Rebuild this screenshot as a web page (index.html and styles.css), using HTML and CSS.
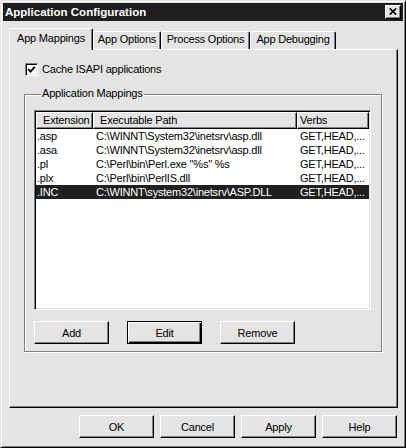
FILE: index.html
```html
<!DOCTYPE html>
<html>
<head>
<meta charset="utf-8">
<link rel="stylesheet" href="styles.css">
</head>
<body>
<div class="window">
  <div class="titlebar">
    <span class="title">Application Configuration</span>
    <div class="close"><svg width="8" height="7" viewBox="0 0 8 7"><path d="M0.8 0.5L7.2 6.5M7.2 0.5L0.8 6.5" stroke="#000" stroke-width="1.7" fill="none"/></svg></div>
  </div>
  <div class="body">
    <div class="tabs">
      <div class="tab sel t1">App Mappings</div>
      <div class="tab t2">App Options</div>
      <div class="tab t3">Process Options</div>
      <div class="tab t4">App Debugging</div>
    </div>
    <div class="panel">
      <div class="check-row">
        <span class="checkbox"><svg width="9" height="9" viewBox="0 0 9 9"><path d="M1.2 4.2L3.5 6.6L7.8 1.8" stroke="#000" stroke-width="1.8" fill="none"/></svg></span>
        <span>Cache ISAPI applications</span>
      </div>
      <div class="group">
        <div class="legend">Application Mappings</div>
        <div class="list">
          <div class="lhead">
            <div class="hc h1">Extension</div>
            <div class="hc h2">Executable Path</div>
            <div class="hc h3">Verbs</div>
          </div>
          <div class="row"><span class="c1">.asp</span><span class="c2">C:\WINNT\System32\inetsrv\asp.dll</span><span class="c3">GET,HEAD,...</span></div>
          <div class="row"><span class="c1">.asa</span><span class="c2">C:\WINNT\System32\inetsrv\asp.dll</span><span class="c3">GET,HEAD,...</span></div>
          <div class="row"><span class="c1">.pl</span><span class="c2">C:\Perl\bin\Perl.exe "%s" %s</span><span class="c3">GET,HEAD,...</span></div>
          <div class="row"><span class="c1">.plx</span><span class="c2">C:\Perl\bin\PerlIS.dll</span><span class="c3">GET,HEAD,...</span></div>
          <div class="row selected"><span class="c1">.INC</span><span class="c2">C:\WINNT\system32\inetsrv\ASP.DLL</span><span class="c3">GET,HEAD,...</span></div>
        </div>
        <div class="btnrow">
          <button class="btn">Add</button>
          <button class="btn default">Edit</button>
          <button class="btn">Remove</button>
        </div>
      </div>
    </div>
    <div class="dlg-buttons">
      <button class="btn">OK</button>
      <button class="btn">Cancel</button>
      <button class="btn">Apply</button>
      <button class="btn">Help</button>
    </div>
  </div>
</div>
</body>
</html>
```
FILE: styles.css
```css
* { box-sizing: border-box; }
html, body { margin: 0; padding: 0; background: #e4e4e4; }
body {
  font-family: "Liberation Sans", Arial, sans-serif;
  font-size: 11px;
  letter-spacing: -0.2px;
  color: #000;
}
.window {
  width: 406px;
  height: 448px;
  background: #e4e4e4;
  border: 1px solid;
  border-color: #e4e4e4 #000 #000 #e4e4e4;
  box-shadow: inset 1px 1px #fff, inset -1px -1px #808080;
  padding: 2px;
}
.titlebar {
  height: 18px;
  background: #1e1e1e;
  display: flex;
  align-items: center;
  justify-content: space-between;
  padding: 0 2px 0 2px;
}
.title {
  color: #fff;
  font-weight: bold;
  font-size: 11.5px;
  letter-spacing: 0;
  line-height: 14px;
}
.close {
  width: 16px;
  height: 14px;
  background: #e4e4e4;
  border: 1px solid;
  border-color: #fff #000 #000 #fff;
  box-shadow: inset -1px -1px #808080;
  display: flex;
  align-items: center;
  justify-content: center;
  padding-bottom: 1px;
}
.body {
  padding: 7px 5px 0 6px;
}
.tabs {
  display: flex;
  align-items: flex-end;
  height: 21px;
}
.tab {
  height: 18px;
  border-top: 1px solid #fff;
  border-left: 1px solid #fff;
  border-right: 1px solid #000;
  box-shadow: inset -1px 0 #808080;
  border-radius: 2px 2px 0 0;
  text-align: center;
  line-height: 13px;
  padding-top: 1px;
  background: #e4e4e4;
}
.tab.sel {
  height: 22px;
  margin-bottom: -1px;
  padding-top: 3px;
  z-index: 1;
}
.t1 { width: 84px; }
.t2 { width: 68px; }
.t3 { width: 89px; }
.t4 { width: 86px; }
.panel {
  height: 359px;
  border: 1px solid;
  border-color: #fff #000 #000 #fff;
  box-shadow: inset -1px -1px #808080;
  padding: 13px 0 0 15px;
}
.check-row {
  display: flex;
  align-items: center;
  gap: 4px;
  height: 13px;
  line-height: 13px;
}
.checkbox {
  width: 13px;
  height: 13px;
  background: #fff;
  border: 1px solid;
  border-color: #808080 #fff #fff #808080;
  box-shadow: inset 1px 1px #000, inset -1px -1px #e4e4e4;
  display: flex;
  align-items: center;
  justify-content: center;
}
.group {
  margin: 18px 0 0 -1px;
  width: 358px;
  border: 1px solid #808080;
  box-shadow: 1px 1px 0 #fff, inset 1px 1px 0 #fff;
  padding: 0 0 7px 9px;
}
.legend {
  width: fit-content;
  margin: -8px 0 0 7px;
  padding: 0 1px;
  line-height: 13px;
  background: #e4e4e4;
}
.list {
  margin-top: 10px;
  width: 337px;
  height: 200px;
  background: #fff;
  border: 1px solid;
  border-color: #808080 #fff #fff #808080;
  box-shadow: inset 1px 1px #000, inset -1px -1px #e4e4e4;
  padding: 1px;
}
.lhead, .row {
  display: grid;
  grid-template-columns: 57px 204px 72px;
}
.lhead { height: 17px; }
.hc {
  background: #e4e4e4;
  border: 1px solid;
  border-color: #fff #000 #000 #fff;
  box-shadow: inset -1px -1px #808080;
  line-height: 15px;
  white-space: nowrap;
  overflow: hidden;
}
.h1 { padding-left: 6px; }
.h2 { padding-left: 6px; }
.h3 { padding-left: 2px; }
.row {
  height: 14px;
  line-height: 14px;
  white-space: nowrap;
}
.row span { overflow: hidden; }
.c1 { padding-left: 1px; }
.c2 { padding-left: 3px; }
.c3 { padding-left: 3px; }
.row.selected {
  background: #202020;
  color: #fff;
}
.btn {
  width: 75px;
  height: 23px;
  background: #e4e4e4;
  border: 1px solid;
  border-color: #fff #000 #000 #fff;
  box-shadow: inset -1px -1px #808080;
  font-family: "Liberation Sans", Arial, sans-serif;
  font-size: 11px;
  letter-spacing: -0.2px;
  color: #000;
  padding: 0;
  margin: 0;
}
.btn.default {
  border-color: #000;
  box-shadow: inset 1px 1px #fff, inset -1px -1px #000, inset -2px -2px #808080;
}
.btnrow {
  display: flex;
  gap: 18px;
  margin-top: 11px;
}
.dlg-buttons {
  display: flex;
  justify-content: flex-end;
  gap: 6px;
  margin: 7px 1px 0 0;
}
```
